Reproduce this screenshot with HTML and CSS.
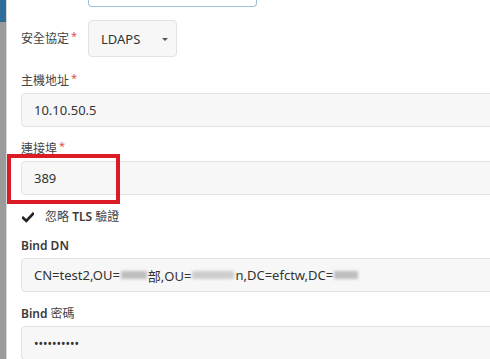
FILE: index.html
```html
<!DOCTYPE html>
<html lang="zh-Hant">
<head>
<meta charset="utf-8">
<link rel="stylesheet" href="styles.css">
</head>
<body>
<div class="page">
  <div class="side"><div class="side-top"></div></div>
  <main class="form">
    <div class="input-stub"></div>
    <div class="row-inline">
      <label class="label inline-label"><span class="cjk">安全協定</span><span class="req">*</span></label>
      <div class="select">LDAPS<span class="caret"></span></div>
    </div>
    <div class="group host">
      <label class="label"><span class="cjk">主機地址</span><span class="req">*</span></label>
      <div class="input">10.10.50.5</div>
    </div>
    <div class="group port">
      <label class="label"><span class="cjk">連接埠</span><span class="req">*</span></label>
      <div class="input">389</div>
      <div class="highlight"></div>
    </div>
    <div class="check-row">
      <svg class="check" width="12" height="11" viewBox="0 0 12 11"><path d="M1 5.8 L4.3 9 L11 1.8" fill="none" stroke="#222" stroke-width="2.6" stroke-linecap="square"/></svg>
      <span class="label"><span class="cjk">忽略</span> TLS <span class="cjk">驗證</span></span>
    </div>
    <div class="group dn">
      <label class="label">Bind DN</label>
      <div class="input">CN=test2,OU=<span class="blur b1"></span>部,OU=<span class="blur b2"></span>n,DC=efctw,DC=<span class="blur b3"></span></div>
    </div>
    <div class="group">
      <label class="label">Bind <span class="cjk">密碼</span></label>
      <div class="input pw">••••••••••</div>
    </div>
  </main>
</div>
</body>
</html>
```

FILE: styles.css
```css
html, body {
  margin: 0;
  padding: 0;
  background: #fff;
  overflow: hidden;
  width: 490px;
  height: 359px;
}
.page {
  display: flex;
  height: 359px;
  font-family: "Noto Sans", "Noto Sans CJK TC", sans-serif;
  font-size: 12px;
  color: #333;
}
.side {
  width: 7px;
  flex: none;
  background: #9b9b9b;
  border-right: 1px solid #d8d8d8;
  box-sizing: border-box;
}
.side-top {
  height: 22px;
  background: #2d6e98;
}
.form {
  flex: 1;
  padding-left: 14px;
  min-width: 0;
}
.input-stub {
  margin-left: 67px;
  width: 167px;
  height: 6px;
  border: 1px solid #9fc0dc;
  border-top: none;
  border-radius: 0 0 4px 4px;
  background: #fff;
}
.row-inline {
  display: flex;
  align-items: center;
  margin-top: 13px;
}
.inline-label {
  width: 67px;
}
.label {
  display: block;
  line-height: 18px;
  font-weight: 600;
  color: #3a3a3a;
}
.cjk {
  font-weight: 400;
  color: #444;
}
.row-inline .label { display: inline-block; }
.req {
  color: #d9534f;
  font-size: 11px;
  font-weight: 400;
  vertical-align: top;
  margin-left: 2px;
  position: relative;
  top: -3px;
}
.select {
  width: 89px;
  height: 37px;
  box-sizing: border-box;
  border: 1px solid #e2e2e2;
  border-radius: 4px;
  background: #f7f7f7;
  display: flex;
  align-items: center;
  padding-left: 12px;
  font-size: 13px;
  color: #333;
  position: relative;
}
.caret {
  position: absolute;
  left: 73px;
  top: 17px;
  width: 0;
  height: 0;
  border-left: 3px solid transparent;
  border-right: 3px solid transparent;
  border-top: 3px solid #555;
}
.group {
  position: relative;
  margin-top: 13px;
}
.group.host { margin-top: 15px; }
.group.port { margin-top: 13px; }
.group.dn { margin-top: 11px; }
.group .label {
  margin-bottom: 3px;
}
.input {
  width: calc(100% + 20px);
  height: 34px;
  box-sizing: border-box;
  border: 1px solid #e2e2e2;
  border-radius: 4px;
  background: #f7f7f7;
  display: flex;
  align-items: center;
  padding-left: 12px;
  font-size: 13px;
  color: #333;
  white-space: nowrap;
}
.highlight {
  position: absolute;
  left: -14px;
  top: 14px;
  width: 113px;
  height: 50px;
  box-sizing: border-box;
  border: 4px solid #dc1c24;
}
.check-row {
  display: flex;
  align-items: center;
  gap: 11px;
  margin-top: 13px;
  height: 18px;
  padding-left: 1px;
}
.check { flex: none; }
.blur {
  display: inline-block;
  height: 8px;
  background: #bdbdbd;
  filter: blur(1.5px);
  margin: 0 1px;
}
.b1 { width: 26px; }
.b2 { width: 42px; background: #cdcdcd; }
.b3 { width: 24px; }
.pw {
  font-size: 12px;
}
```
